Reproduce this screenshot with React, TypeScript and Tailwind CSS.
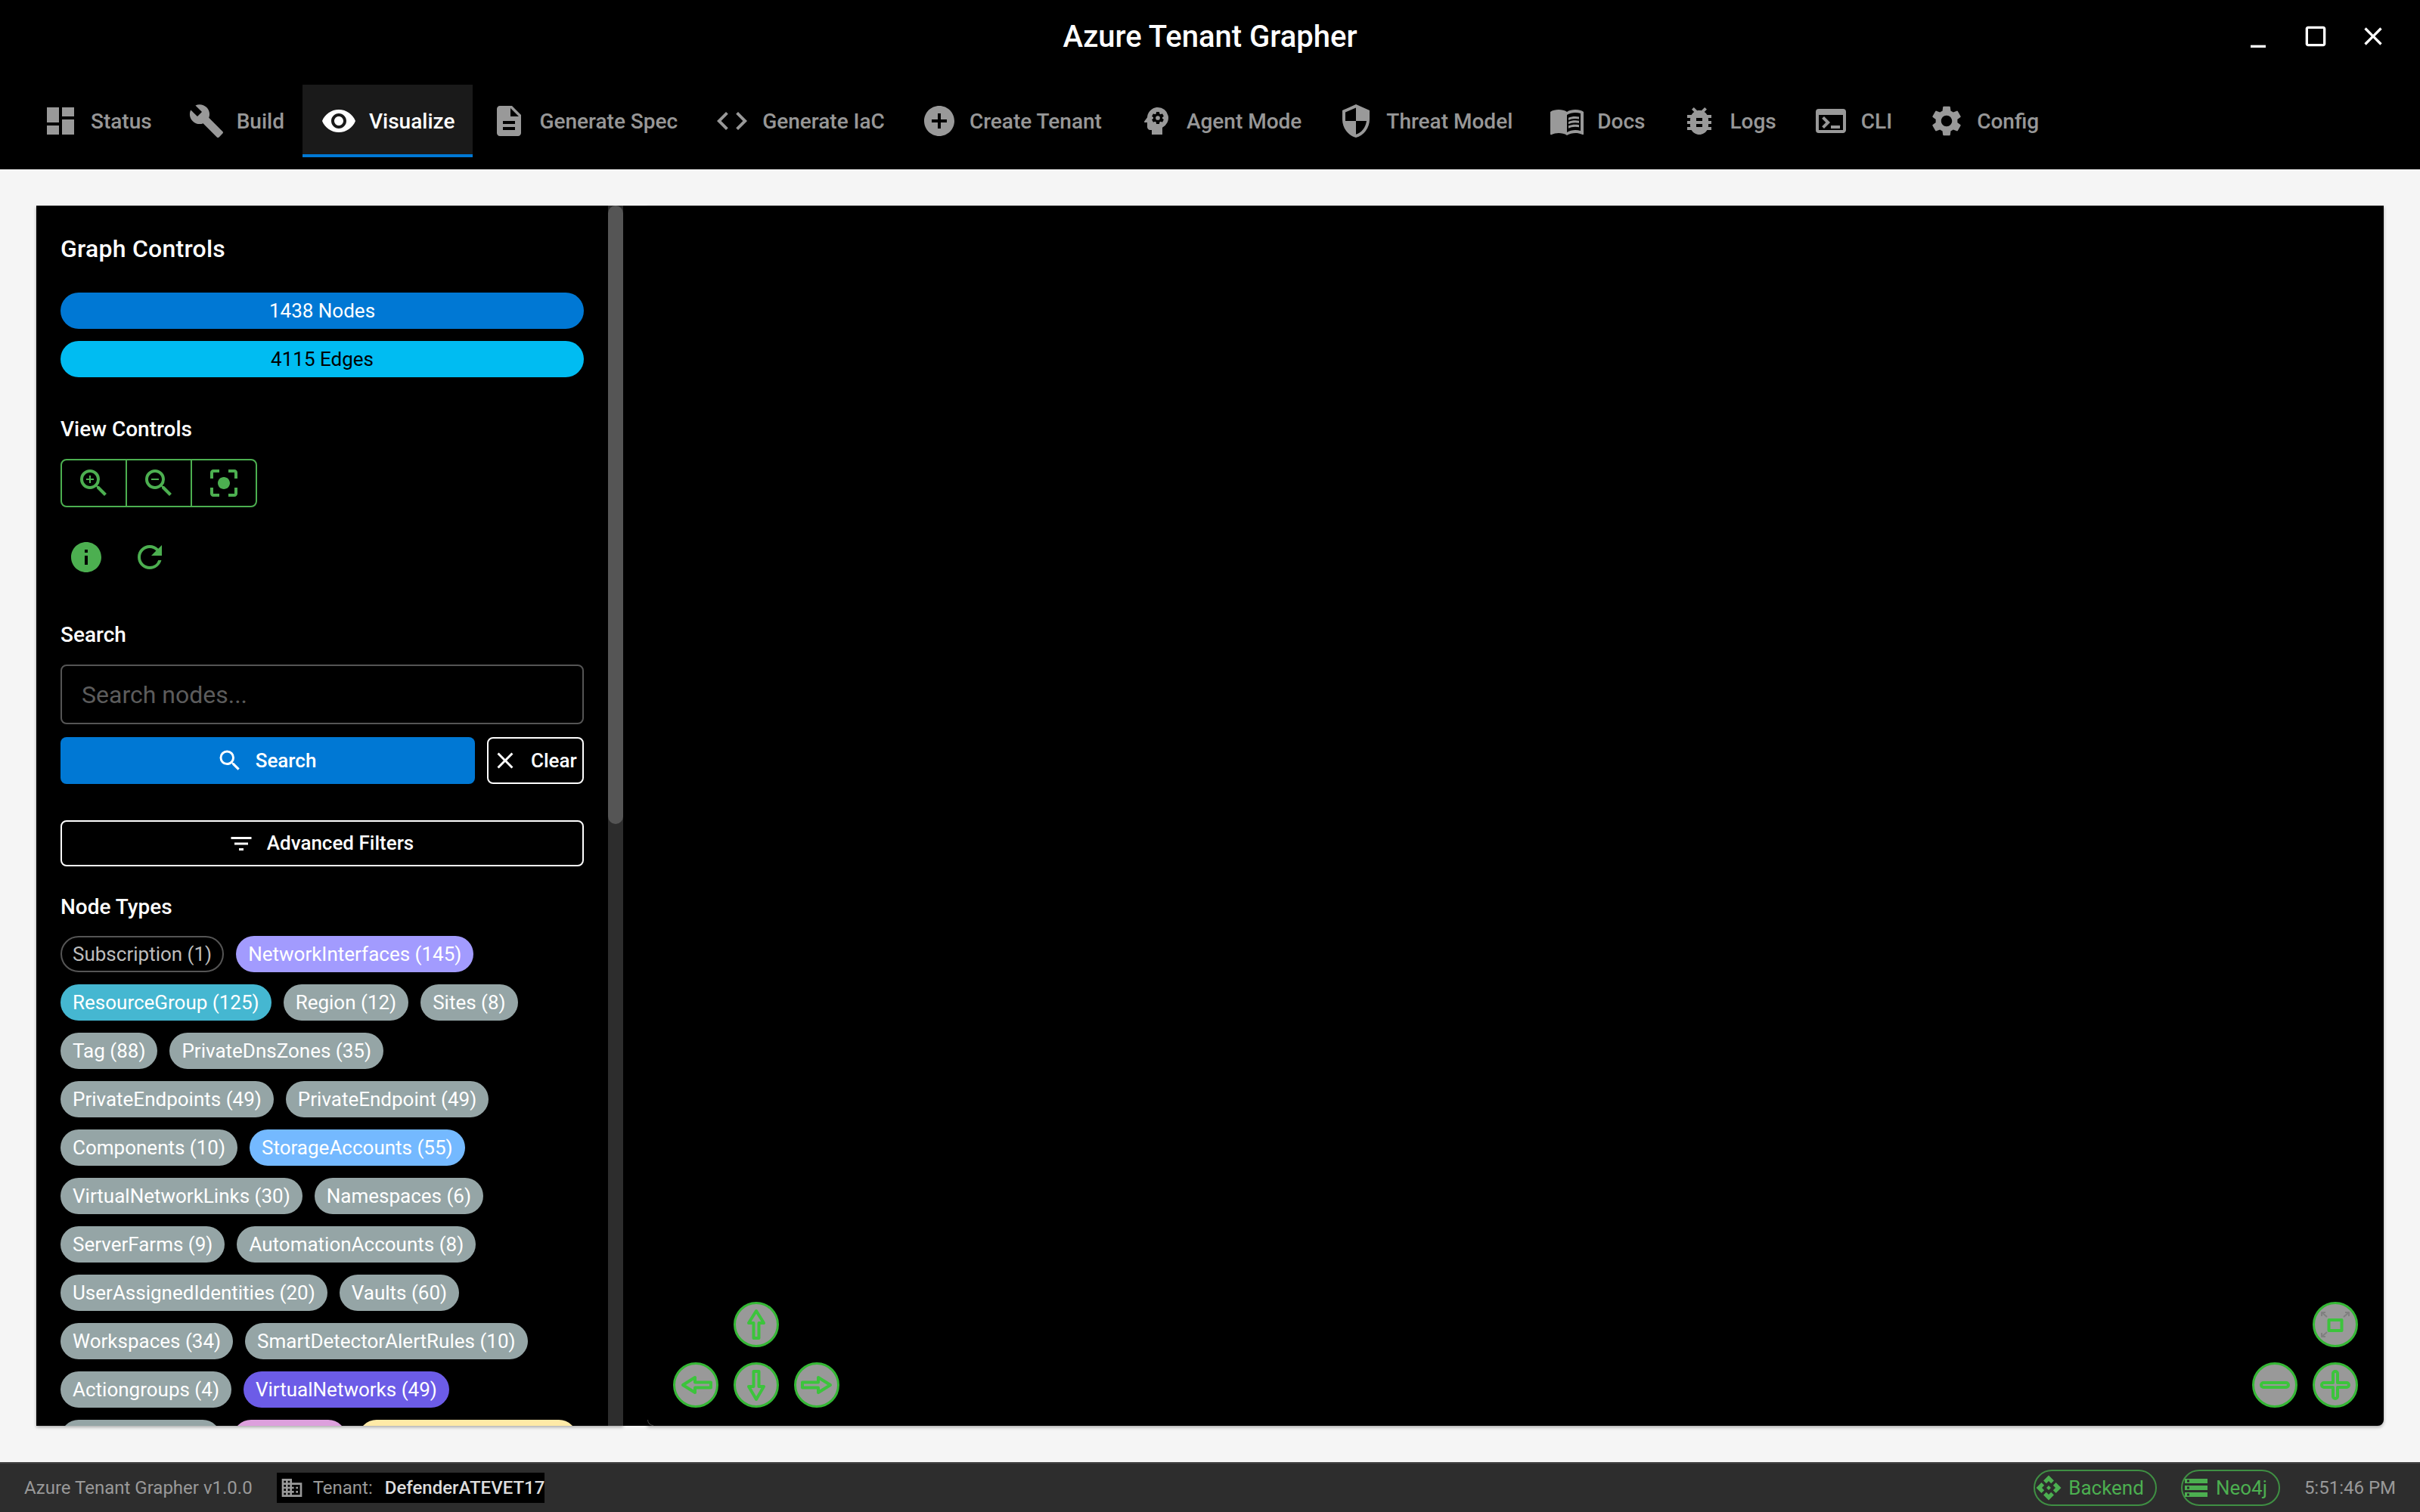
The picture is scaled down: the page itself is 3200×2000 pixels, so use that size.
import type { ReactNode } from "react";
import {
  MdApi,
  MdBugReport,
  MdBuild,
  MdBusiness,
  MdCenterFocusStrong,
  MdClear,
  MdClose,
  MdCode,
  MdCropSquare,
  MdDashboard,
  MdDescription,
  MdFilterList,
  MdAddCircle,
  MdInfo,
  MdMenuBook,
  MdMinimize,
  MdPsychology,
  MdRefresh,
  MdSearch,
  MdSecurity,
  MdSettings,
  MdStorage,
  MdTerminal,
  MdVisibility,
  MdZoomIn,
  MdZoomOut,
} from "react-icons/md";

const tabs = [
  { label: "Status", icon: MdDashboard },
  { label: "Build", icon: MdBuild },
  { label: "Visualize", icon: MdVisibility, active: true },
  { label: "Generate Spec", icon: MdDescription },
  { label: "Generate IaC", icon: MdCode },
  { label: "Create Tenant", icon: MdAddCircle },
  { label: "Agent Mode", icon: MdPsychology },
  { label: "Threat Model", icon: MdSecurity },
  { label: "Docs", icon: MdMenuBook },
  { label: "Logs", icon: MdBugReport },
  { label: "CLI", icon: MdTerminal },
  { label: "Config", icon: MdSettings },
];

const GREY = "bg-[#95a5a6] text-white";

const chips = [
  { label: "Subscription (1)", cls: "border-2 border-[#555] text-[#bdbdbd] px-[14px]" },
  { label: "NetworkInterfaces (145)", cls: "bg-[#a29bfe] text-white px-4" },
  { label: "ResourceGroup (125)", cls: "bg-[#45b7d1] text-white px-4" },
  { label: "Region (12)", cls: `${GREY} px-4` },
  { label: "Sites (8)", cls: `${GREY} px-4` },
  { label: "Tag (88)", cls: `${GREY} px-4` },
  { label: "PrivateDnsZones (35)", cls: `${GREY} px-4` },
  { label: "PrivateEndpoints (49)", cls: `${GREY} px-4` },
  { label: "PrivateEndpoint (49)", cls: `${GREY} px-4` },
  { label: "Components (10)", cls: `${GREY} px-4` },
  { label: "StorageAccounts (55)", cls: "bg-[#74b9ff] text-white px-4" },
  { label: "VirtualNetworkLinks (30)", cls: `${GREY} px-4` },
  { label: "Namespaces (6)", cls: `${GREY} px-4` },
  { label: "ServerFarms (9)", cls: `${GREY} px-4` },
  { label: "AutomationAccounts (8)", cls: `${GREY} px-4` },
  { label: "UserAssignedIdentities (20)", cls: `${GREY} px-4` },
  { label: "Vaults (60)", cls: `${GREY} px-4` },
  { label: "Workspaces (34)", cls: `${GREY} px-4` },
  { label: "SmartDetectorAlertRules (10)", cls: `${GREY} px-4` },
  { label: "Actiongroups (4)", cls: `${GREY} px-4` },
  { label: "VirtualNetworks (49)", cls: "bg-[#6c5ce7] text-white px-4" },
];

function NavButton({ className, children }: { className: string; children: ReactNode }) {
  return (
    <div className={`absolute w-[60px] h-[60px] rounded-full bg-[#999] border-[3px] border-[#35b835] blur-[0.6px] ${className}`}>
      <svg viewBox="0 0 60 60" className="absolute -left-[3px] -top-[3px] w-[60px] h-[60px]" fill="none" stroke="#3cc43c" strokeWidth="4" strokeLinejoin="round">
        {children}
      </svg>
    </div>
  );
}

function Canvas() {
  return (
    <div className="relative flex-1 bg-black rounded-br-lg shadow-[0_2px_4px_rgba(0,0,0,0.3)]">
      <div className="absolute left-0 bottom-0 w-2 h-2 rounded-bl-lg border-l border-b border-[#444]" />
      <NavButton className="left-[114px] top-[1450px]">
        <path d="M30 12 L40 28 H33.5 V48 H26.5 V28 H20 Z" />
      </NavButton>
      <NavButton className="left-[34px] top-[1530px]">
        <path d="M13 30 L29 20 V26.5 H50 V33.5 H29 V40 Z" />
      </NavButton>
      <NavButton className="left-[114px] top-[1530px]">
        <path d="M30 49 L40 32 H33.5 V12 H26.5 V32 H20 Z" />
      </NavButton>
      <NavButton className="left-[194px] top-[1530px]">
        <path d="M48 30 L32 20 V26.5 H11 V33.5 H32 V40 Z" />
      </NavButton>
      <NavButton className="left-[2202px] top-[1450px]">
        <rect x="21.5" y="24" width="17" height="14" />
        <path d="M12 19 V14 H17 M12 14 L19 20 M48 19 V14 H43 M48 14 L41 20 M12 41 V46 H17 M12 46 L19 40" stroke="#808080" strokeWidth="2" />
      </NavButton>
      <NavButton className="left-[2122px] top-[1530px]">
        <rect x="12" y="27" width="36" height="6" rx="3" />
      </NavButton>
      <NavButton className="left-[2202px] top-[1530px]">
        <path d="M27 15 a3 3 0 0 1 6 0 V27 H45 a3 3 0 0 1 0 6 H33 V45 a3 3 0 0 1 -6 0 V33 H15 a3 3 0 0 1 0 -6 H27 Z" />
      </NavButton>
    </div>
  );
}

function Sidebar() {
  return (
    <div className="flex w-[776px] shrink-0 bg-black shadow-[0_2px_4px_rgba(0,0,0,0.3)]">
      <div className="w-[756px] shrink-0 overflow-hidden px-8 pt-8 text-white">
        <h2 className="text-[32px] leading-[51px] font-medium tracking-[0.0075em]">Graph Controls</h2>
        <div className="mt-8 flex flex-col gap-4">
          <div className="h-12 rounded-full bg-[#0078d4] text-white text-[26px] flex items-center justify-center">1438 Nodes</div>
          <div className="h-12 rounded-full bg-[#00bcf2] text-black text-[26px] flex items-center justify-center">4115 Edges</div>
        </div>

        <div className="mt-[49px] text-[28px] leading-[40px] font-medium">View Controls</div>
        <div className="mt-[19px] flex w-[260px] h-16 rounded-lg border-2 border-[#4caf50] text-[#4caf50] divide-x-2 divide-[#4caf50]">
          <div className="flex-1 flex items-center justify-center"><MdZoomIn size={48} /></div>
          <div className="flex-1 flex items-center justify-center"><MdZoomOut size={48} /></div>
          <div className="flex-1 flex items-center justify-center"><MdCenterFocusStrong size={48} /></div>
        </div>
        <div className="mt-[42px] flex gap-[36px] pl-[10px] text-[#4caf50]">
          <MdInfo size={48} />
          <MdRefresh size={48} />
        </div>

        <div className="mt-[59px] text-[28px] leading-[40px] font-medium">Search</div>
        <div className="mt-[19px] h-[79px] rounded-lg border-2 border-[#555] flex items-center px-[26px] text-[32px] text-[#5c5c5c]">Search nodes...</div>
        <div className="mt-[17px] flex gap-4 text-[26px] font-medium">
          <div className="w-[548px] h-[62px] rounded-lg bg-[#0078d4] flex items-center justify-center gap-4 pr-1">
            <MdSearch size={36} />
            <span>Search</span>
          </div>
          <div className="w-[128px] h-[62px] rounded-lg border-2 border-white flex items-center gap-4 pl-1 whitespace-nowrap">
            <MdClear size={36} />
            <span>Clear</span>
          </div>
        </div>
        <div className="mt-12 h-[61px] rounded-lg border-2 border-white flex items-center justify-center gap-4 pr-1 text-[26px] font-medium">
          <MdFilterList size={36} />
          <span>Advanced Filters</span>
        </div>

        <div className="mt-[34px] text-[28px] leading-[40px] font-medium">Node Types</div>
        <div className="mt-[18px] flex flex-wrap gap-4">
          {chips.map((c) => (
            <div key={c.label} className={`h-12 rounded-full flex items-center text-[26px] whitespace-nowrap ${c.cls}`}>
              {c.label}
            </div>
          ))}
          {/* Next row is cut by the panel edge: only the chip tops show */}
          <div className="h-12 w-[212px] rounded-full bg-[#95a5a6]" />
          <div className="h-12 w-[150px] rounded-full bg-[#dda0dd]" />
          <div className="h-12 w-[289px] rounded-full bg-[#ffeaa7]" />
        </div>
      </div>
      {/* Scrollbar */}
      <div className="w-5 shrink-0 bg-[#2d2d2d]">
        <div className="h-[818px] rounded-[10px] bg-[#555]" />
      </div>
    </div>
  );
}

export default function App() {
  return (
    <div className="flex flex-col w-[3200px] h-[2000px] overflow-hidden bg-[#f5f5f5] font-['Roboto',sans-serif]">
      {/* Title bar + tabs */}
      <header className="relative h-[224px] shrink-0 bg-black text-white">
        <div className="h-[112px] text-center pt-6 text-[40px] leading-[50px] font-medium">Azure Tenant Grapher</div>
        <div className="absolute right-[42px] top-[28px] flex gap-[36px]">
          <MdMinimize size={40} />
          <MdCropSquare size={40} />
          <MdClose size={40} />
        </div>
        <nav className="flex h-24 px-8">
          {tabs.map((t) => {
            const Icon = t.icon;
            return (
              <div
                key={t.label}
                className={`flex items-center gap-4 px-6 text-[28px] font-medium whitespace-nowrap ${
                  t.active ? "bg-[#1a1a1a] text-white shadow-[inset_0_-4px_0_#0078d4]" : "text-white/60"
                }`}
              >
                <Icon size={48} />
                <span className="pt-0.5">{t.label}</span>
              </div>
            );
          })}
        </nav>
      </header>

      <main className="flex-1 min-h-0 px-12 py-12">
        <div className="flex h-full">
          <Sidebar />
          <div className="w-8 shrink-0 bg-black" />
          <Canvas />
        </div>
      </main>

      {/* Status bar */}
      <footer className="h-[66px] shrink-0 flex items-center border-t-2 border-[#424242] bg-[#2d2d2d] pl-8 pr-8 text-[24px] text-[#999]">
        <span>Azure Tenant Grapher v1.0.0</span>
        <div className="ml-8 h-10 w-[354px] bg-black flex items-center overflow-hidden whitespace-nowrap pl-1">
          <MdBusiness size={32} className="shrink-0" />
          <span className="ml-3">Tenant:</span>
          <span className="ml-4 font-medium text-[#ddd]">DefenderATEVET17</span>
        </div>
        <div className="ml-auto flex items-center gap-8 text-[#4caf50]">
          <div className="h-12 rounded-full border-2 border-[#3f8f43] flex items-center gap-2 pr-[15px] text-[26px]">
            <MdApi size={36} />
            <span>Backend</span>
          </div>
          <div className="h-12 rounded-full border-2 border-[#3f8f43] flex items-center gap-2 pr-[15px] text-[26px]">
            <MdStorage size={36} />
            <span>Neo4j</span>
          </div>
          <span className="text-[24px] text-[#999]">5:51:46 PM</span>
        </div>
      </footer>
    </div>
  );
}
